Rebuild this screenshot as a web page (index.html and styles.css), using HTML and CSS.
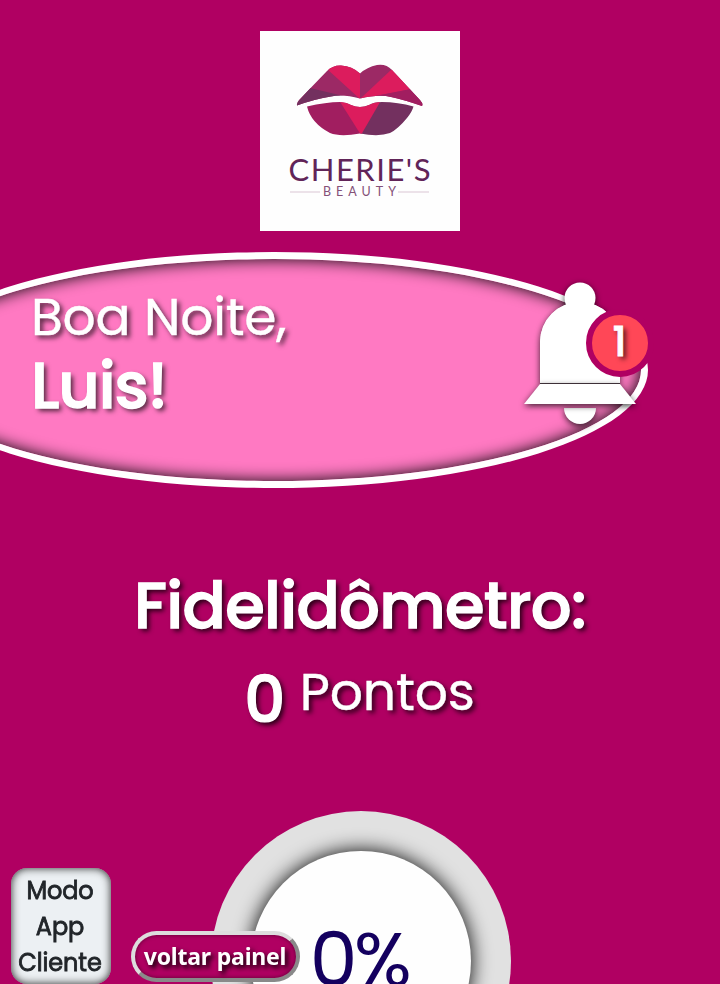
FILE: index.html
```
<!DOCTYPE html>
<html lang="pt-BR">
<head>
<meta charset="utf-8">
<title>Cherie's Beauty</title>
<link rel="stylesheet" href="styles.css">
</head>
<body>
<main class="page">
  <svg class="logo" viewBox="0 0 200 200" role="img" aria-label="Cherie's Beauty">
    <defs>
      <clipPath id="upper"><path d="M37 74.5Q36.500 72 39 69L67 40Q73 34 81 34.500Q92 35 100 42.500Q107 36 117 34Q126 32.500 132 39L160 69Q163.500 73 162 75Q143 68.500 131 66Q119 63 100 67.500Q83 63 71 65.500Q55 68 37 74.500Z"/></clipPath>
      <clipPath id="lower"><path d="M47 75.500Q66 71 80 71Q87 71.500 91 74Q100 78 109 74Q114 71 122 71Q138 71 153.500 75.500Q152 81 147 87Q138 98 130 102Q119 106 100 102.500Q80 106 70 102Q51 92 47 75.500Z"/></clipPath>
    </defs>
    <rect width="200" height="200" fill="#fefefe"/>
    <g clip-path="url(#upper)">
      <path fill="#9c2965" d="M30 30H170V80H30Z"/>
      <path fill="#dc1c5d" d="M67 38L75 30H100V68Z"/>
      <path fill="#73305f" d="M30 80L50 57L96 68L60 82Z"/>
      <path fill="#dc1c5d" d="M100 68L132 38L152 58Z"/>
      <path fill="#a11e60" d="M100 68L151 58L170 80Z"/>
    </g>
    <g clip-path="url(#lower)">
      <path fill="#a11e60" d="M40 65H100V110H40Z"/>
      <path fill="#73305f" d="M100 65H160V110H100Z"/>
      <path fill="#dc1c5d" d="M77 66H123L101 104Z"/>
    </g>
    <text class="logo-name" x="28.500" y="150" textLength="142">CHERIE'S</text>
    <text class="logo-sub" x="63" y="165" textLength="73">BEAUTY</text>
    <path d="M30 161H60M138 161H169" stroke="#e6d9e2" stroke-width="1.500"/>
  </svg>

  <header class="greeting">
    <p class="hello">Boa Noite,</p>
    <p class="user">Luis!</p>
    <div class="bell">
      <svg class="bell-icon" viewBox="0 0 128 154" aria-hidden="true">
        <g fill="#fff">
          <path class="part" d="M48 134H80A16 16 0 0 1 48 134Z"/>
          <path class="part" d="M24 109V68A40 40 0 0 1 104 68V109Z"/>
          <circle class="part" cx="64" cy="24" r="15.500"/>
          <path d="M24 68A40 40 0 0 1 104 68V109H24Z"/>
          <path class="part" d="M24 110H104L120 130H8Z"/>
          <path d="M24 109.500H104" stroke="#3d3038"/>
        </g>
      </svg>
      <span class="badge">1</span>
    </div>
  </header>

  <section class="loyalty">
    <h1 class="title">Fidelidômetro:</h1>
    <p class="points"><b class="count">0</b><span class="unit">Pontos</span></p>
    <div class="gauge"><div class="gauge-core">0%</div></div>
  </section>
</main>
<nav class="dock">
  <div class="mode">Modo<br>App<br>Cliente</div>
  <button class="back">voltar painel</button>
</nav>
</body>
</html>
```
FILE: styles.css
```
* { box-sizing: border-box; }
html, body { height: 100%; }
body {
  margin: 0;
  overflow: hidden;
  background: #b00062;
  color: #fff;
  font-family: Poppins, Inter, "Liberation Sans", sans-serif;
}
p, h1 { margin: 0; }
.page {
  display: flex;
  flex-direction: column;
  align-items: center;
  height: 984px;
  padding-top: 30.5px;
  overflow: hidden;
}
.logo { width: 200px; height: 200px; flex: none; }
.logo-name { font: 31px Lato, sans-serif; fill: #612458; }
.logo-sub { font: 12.5px Lato, sans-serif; fill: #845078; }
.greeting {
  position: relative;
  align-self: flex-start;
  flex: none;
  width: 748px;
  height: 236px;
  margin: 21.5px 0 0 -100px;
  padding: 25px 0 0 124px;
  border: 7px solid #fff;
  border-radius: 50%;
  background: #ff79c2;
  box-shadow: inset 0 0 16px #000;
  text-shadow: 3px 3px 5px rgba(0, 0, 0, .7);
}
.hello { font-size: 52px; line-height: 66px; letter-spacing: -.3px; white-space: nowrap; -webkit-text-stroke: .4px #fff; }
.user { font-size: 64px; line-height: 72px; font-weight: 500; letter-spacing: -1.1px; -webkit-text-stroke: 1.4px #fff; }
.bell { position: absolute; left: 609px; top: 15px; width: 128px; height: 154px; }
.bell-icon { display: block; width: 128px; height: 154px; overflow: visible; }
.part { filter: drop-shadow(0 2px 3px rgba(0, 0, 0, .75)); }
.badge {
  position: absolute;
  left: 69.5px;
  top: 35px;
  width: 68px;
  height: 68px;
  border: 6.5px solid #b00062;
  border-radius: 50%;
  background: #ff4757;
  font-size: 40px;
  line-height: 54px;
  font-weight: 500;
  text-align: center;
  -webkit-text-stroke: .8px #fff;
}
.loyalty {
  display: flex;
  flex-direction: column;
  align-items: center;
  flex: none;
  padding-top: 79px;
  text-shadow: 3px 3px 5px rgba(0, 0, 0, .8);
}
.title { height: 80px; font-size: 64px; line-height: 78px; font-weight: 500; letter-spacing: -.7px; white-space: nowrap; -webkit-text-stroke: 1.4px #fff; }
.points { display: flex; gap: 16px; height: 100px; margin-left: -1px; padding-top: 13px; }
.count { font-size: 64px; line-height: 80px; font-weight: 500; letter-spacing: -1.5px; -webkit-text-stroke: 1.2px #fff; }
.unit { font-size: 52px; line-height: 64px; letter-spacing: -.2px; -webkit-text-stroke: .4px #fff; }
.gauge {
  display: flex;
  align-items: center;
  justify-content: center;
  width: 300px;
  height: 300px;
  margin: 64px 0 0 2px;
  border-radius: 50%;
  background: #e1e1e1;
}
.gauge-core {
  width: 220px;
  height: 220px;
  padding-right: 4px;
  border-radius: 50%;
  background: #fefefe;
  box-shadow: 0 0 20px #000;
  color: #14005f;
  font-size: 76px;
  line-height: 218px;
  letter-spacing: -3.5px;
  text-align: center;
  text-shadow: none;
}
.dock {
  position: fixed;
  left: 11px;
  bottom: 0;
  display: flex;
  align-items: flex-end;
  gap: 20px;
}
.mode {
  width: 100px;
  height: 116px;
  padding: 5px 2px 0 0;
  border-radius: 16px;
  background: #ecf0f3;
  box-shadow: inset 0 0 8px #222;
  color: #212529;
  font-size: 24px;
  line-height: 36px;
  letter-spacing: -.1px;
  -webkit-text-stroke: .8px #212529;
  text-align: center;
}
.back {
  width: 169px;
  height: 51px;
  margin-bottom: 2px;
  padding: 0 1px 2px 0;
  border: 4px outset #ddd;
  border-radius: 26px;
  background: #b00062;
  box-shadow: inset 0 0 4px rgba(0, 0, 0, .5);
  color: #fff;
  font: bold 23px "Noto Sans", sans-serif;
  line-height: 40px;
  letter-spacing: -.2px;
  text-shadow: 3px 3px 5px #000;
}
```
